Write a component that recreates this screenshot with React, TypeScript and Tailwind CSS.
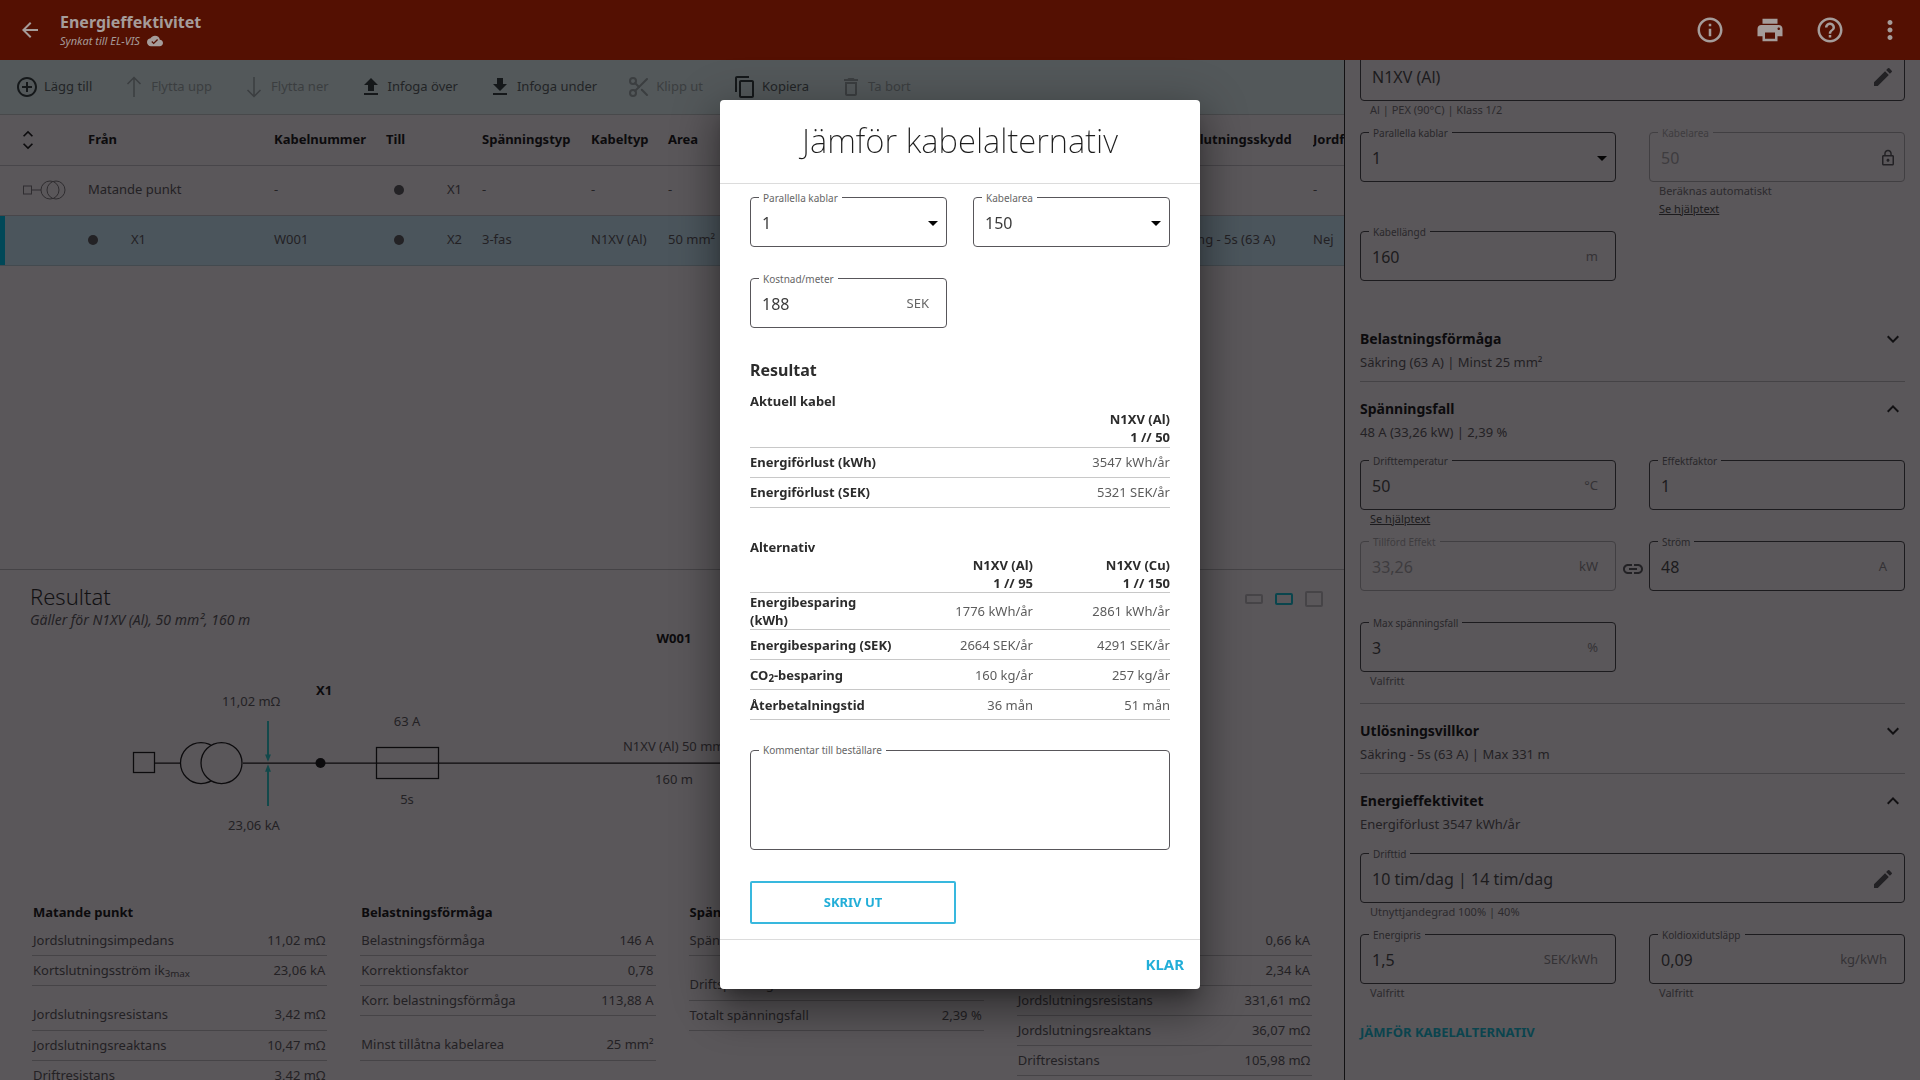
import type { ReactNode } from "react";
import { Scissors } from "lucide-react";
import {
  MdAddCircleOutline,
  MdArrowBack,
  MdArrowDropDown,
  MdCloudDone,
  MdContentCopy,
  MdDeleteOutline,
  MdFileDownload,
  MdFileUpload,
  MdHelpOutline,
  MdInfoOutline,
  MdKeyboardArrowDown,
  MdKeyboardArrowUp,
  MdLink,
  MdLockOutline,
  MdMoreVert,
  MdPrint,
} from "react-icons/md";

const ThinArrow = ({ down = false }: { down?: boolean }) => (
  <svg
    className={down ? "size-6 rotate-180" : "size-6"}
    viewBox="0 0 24 24"
    fill="none"
    stroke="currentColor"
    strokeWidth="1.5"
  >
    <path d="M12 22V3M5.500 9L12 2.500L18.500 9" />
  </svg>
);

const Header = () => (
  <header className="flex h-15 shrink-0 items-center justify-between bg-[#541002] pr-[15px] pl-[18px] text-[#a59c9a]">
    <div className="flex items-center gap-[18px]">
      <button type="button" aria-label="Tillbaka">
        <MdArrowBack className="size-6" />
      </button>
      <div>
        <h1 className="text-base leading-[22px] font-bold">Energieffektivitet</h1>
        <p className="flex h-4 items-center gap-[7px] text-[11px] leading-4 italic">
          Synkat till EL-VIS
          <MdCloudDone className="size-4" />
        </p>
      </div>
    </div>
    <div className="flex items-center gap-[30px]">
      <button type="button" aria-label="Information">
        <MdInfoOutline className="size-[30px]" />
      </button>
      <button type="button" aria-label="Skriv ut">
        <MdPrint className="size-[30px]" />
      </button>
      <button type="button" aria-label="Hjälp">
        <MdHelpOutline className="size-[30px]" />
      </button>
      <button type="button" aria-label="Mer">
        <MdMoreVert className="size-[30px]" />
      </button>
    </div>
  </header>
);

interface ToolProps {
  icon: ReactNode;
  label: string;
  disabled?: boolean;
}

const Tool = ({ icon, label, disabled = false }: ToolProps) => (
  <button
    type="button"
    disabled={disabled}
    className={`flex shrink-0 items-center gap-[5px] ${disabled ? "text-[#3b3e40]" : "text-[#15181a]"}`}
  >
    {icon}
    <span className={disabled ? "" : "text-[#222426]"}>{label}</span>
  </button>
);

const Toolbar = () => (
  <div className="flex h-[55px] shrink-0 items-center gap-[30px] overflow-hidden border-b border-[#48494b] bg-[#53585a] pl-[15px] text-[13px]">
    <Tool icon={<MdAddCircleOutline className="size-6" />} label="Lägg till" />
    <Tool icon={<ThinArrow />} label="Flytta upp" disabled />
    <Tool icon={<ThinArrow down />} label="Flytta ner" disabled />
    <Tool icon={<MdFileUpload className="size-6" />} label="Infoga över" />
    <Tool icon={<MdFileDownload className="size-6" />} label="Infoga under" />
    <Tool icon={<Scissors className="size-6" strokeWidth={2} />} label="Klipp ut" disabled />
    <Tool icon={<MdContentCopy className="size-6" />} label="Kopiera" />
    <Tool icon={<MdDeleteOutline className="size-6" />} label="Ta bort" disabled />
  </div>
);

const Dot = () => <span className="block size-[10px] rounded-full bg-[#232225]" />;

const CableTable = () => (
  <table className="w-full table-fixed text-left text-[13px] whitespace-nowrap text-[#232124]">
    <colgroup>
      <col className="w-[88px]" />
      <col className="w-[186px]" />
      <col className="w-[112px]" />
      <col className="w-[96px]" />
      <col className="w-[109px]" />
      <col className="w-[77px]" />
      <col className="w-[499px]" />
      <col className="w-[146px]" />
      <col />
    </colgroup>
    <thead>
      <tr className="h-[50px] border-b border-[#48464a] text-[#0c0b0d]">
        <th>
          <button type="button" aria-label="Fäll ut alla" className="ml-[18px] flex flex-col">
            <MdKeyboardArrowUp className="-mb-1 size-5" />
            <MdKeyboardArrowDown className="-mt-1 size-5" />
          </button>
        </th>
        <th>Från</th>
        <th>Kabelnummer</th>
        <th>Till</th>
        <th>Spänningstyp</th>
        <th>Kabeltyp</th>
        <th>Area</th>
        <th>Jordslutningsskydd</th>
        <th className="overflow-hidden">Jordfelsbrytare</th>
      </tr>
    </thead>
    <tbody>
      <tr className="h-[50px] border-b border-[#48464a]">
        <td>
          <svg className="ml-[23px] h-6 w-[44px]" viewBox="0 0 44 24" fill="none" stroke="#2f2d30">
            <rect x="0.500" y="8" width="8" height="8" />
            <path d="M8.500 12H18" />
            <circle cx="27" cy="12" r="9" />
            <circle cx="33" cy="12" r="9" />
          </svg>
        </td>
        <td>Matande punkt</td>
        <td>-</td>
        <td>
          <span className="flex items-center gap-[43px] pl-[8px]">
            <Dot /> X1
          </span>
        </td>
        <td>-</td>
        <td>-</td>
        <td>-</td>
        <td>-</td>
        <td>-</td>
      </tr>
      <tr className="h-[50px] border-b border-[#434a4f] bg-[#4b555c]">
        <td className="shadow-[inset_5px_0_#004858]" />
        <td>
          <span className="flex items-center gap-[33px]">
            <Dot /> X1
          </span>
        </td>
        <td>W001</td>
        <td>
          <span className="flex items-center gap-[43px] pl-[8px]">
            <Dot /> X2
          </span>
        </td>
        <td>3-fas</td>
        <td>N1XV (Al)</td>
        <td>50 mm²</td>
        <td>Säkring - 5s (63 A)</td>
        <td>Nej</td>
      </tr>
    </tbody>
  </table>
);

const Diagram = () => (
  <svg className="mt-[-8px] block h-[278px] w-full" fill="none" stroke="#0c0b0d" strokeWidth="1.25">
    <rect x="133.500" y="131.500" width="21" height="20" />
    <path d="M155 142H180M243 142H1180" />
    <circle cx="201" cy="142" r="20.500" />
    <circle cx="221.500" cy="142" r="20.500" fill="#5a575a" />
    <circle cx="320.500" cy="142" r="5" fill="#0c0b0d" stroke="none" />
    <rect x="376.500" y="126.500" width="62" height="31" />
    <g stroke="#13494b" fill="#13494b">
      <path d="M268 100V135M268 185V149" strokeWidth="2" />
      <path d="M266 134h4l-2 5zM266 150h4l-2-5z" />
    </g>
    <g fill="#232124" stroke="none" className="text-[13px]" textAnchor="middle">
      <text x="251" y="85">11,02 mΩ</text>
      <text x="254" y="209">23,06 kA</text>
      <text x="407" y="105">63 A</text>
      <text x="407" y="183">5s</text>
      <text x="676" y="130">N1XV (Al) 50 mm²</text>
      <text x="674" y="163">160 m</text>
      <g fill="#0c0b0d" className="font-bold">
        <text x="324" y="74">X1</text>
        <text x="674" y="22">W001</text>
      </g>
    </g>
  </svg>
);

interface ResultRow {
  label: ReactNode;
  value: string;
  spaced?: boolean;
}

const results: { title: string; rows: ResultRow[] }[] = [
  {
    title: "Matande punkt",
    rows: [
      { label: "Jordslutningsimpedans", value: "11,02 mΩ" },
      { label: <>Kortslutningsström ik<sub>3max</sub></>, value: "23,06 kA" },
      { label: "Jordslutningsresistans", value: "3,42 mΩ", spaced: true },
      { label: "Jordslutningsreaktans", value: "10,47 mΩ" },
      { label: "Driftresistans", value: "3,42 mΩ" },
    ],
  },
  {
    title: "Belastningsförmåga",
    rows: [
      { label: "Belastningsförmåga", value: "146 A" },
      { label: "Korrektionsfaktor", value: "0,78" },
      { label: "Korr. belastningsförmåga", value: "113,88 A" },
      { label: "Minst tillåtna kabelarea", value: "25 mm²", spaced: true },
    ],
  },
  {
    title: "Spänningsfall",
    rows: [
      { label: "Spänningsfall", value: "2,39 %" },
      { label: "Driftspänning", value: "390 V", spaced: true },
      { label: "Totalt spänningsfall", value: "2,39 %" },
    ],
  },
  {
    title: "Utlösningsvillkor",
    rows: [
      { label: "Jordslutningsström", value: "0,66 kA" },
      { label: "Kortslutningsström", value: "2,34 kA" },
      { label: "Jordslutningsresistans", value: "331,61 mΩ" },
      { label: "Jordslutningsreaktans", value: "36,07 mΩ" },
      { label: "Driftresistans", value: "105,98 mΩ" },
    ],
  },
];

const Results = () => (
  <section className="border-t border-[#454346] text-[#232124]">
    <div className="flex items-start justify-between pt-[11px] pr-[21px] pl-[30px]">
      <div>
        <h2 className="text-[22px] leading-[30px] font-light text-[#121113]">Resultat</h2>
        <p className="text-sm leading-[18px] italic">Gäller för N1XV (Al), 50 mm², 160 m</p>
      </div>
      <div className="flex h-9 items-center gap-3">
        <button type="button" aria-label="Liten vy" className="h-[10px] w-[18px] rounded-xs border-2 border-[#464447]" />
        <button type="button" aria-label="Mellanstor vy" className="h-3 w-[18px] rounded-xs border-2 border-[#0a454d]" />
        <button type="button" aria-label="Stor vy" className="h-4 w-[18px] rounded-xs border-2 border-[#464447]" />
      </div>
    </div>
    <Diagram />
    <div className="grid grid-cols-4 gap-[33px] px-8">
      {results.map((group) => (
        <div key={group.title}>
          <h3 className="px-px text-[13px] leading-[26px] font-bold text-[#0c0b0d]">{group.title}</h3>
          <table className="w-full text-[13px]">
            <tbody>
              {group.rows.map((row, i) => (
                <tr
                  key={i}
                  className={`border-b border-[#464447] ${row.spaced ? "h-[45px] align-bottom" : "h-[30px] align-middle"}`}
                >
                  <th className={`px-px text-left leading-4 font-normal ${row.spaced ? "pb-2" : ""}`}>{row.label}</th>
                  <td className={`px-0.5 text-right leading-4 ${row.spaced ? "pb-2" : ""}`}>{row.value}</td>
                </tr>
              ))}
            </tbody>
          </table>
        </div>
      ))}
    </div>
  </section>
);

interface FieldProps {
  id: string;
  label: string;
  value: string;
  unit?: string;
  icon?: ReactNode;
  helper?: string;
  link?: string;
  options?: string[];
  disabled?: boolean;
  light?: boolean;
}

const Field = ({ id, label, value, unit, icon, helper, link, options, disabled, light }: FieldProps) => {
  const border = light ? "border-[#58565a]" : disabled ? "border-[#413f42]" : "border-[#1c1b1e]";
  const caption = light ? "bg-white text-[#666]" : disabled ? "bg-[#5a575a] text-[#3e3c3f]" : "bg-[#5a575a] text-[#29272a]";
  const text = light ? "text-[#3c3c3c]" : disabled ? "text-[#3e3c3f]" : "text-[#1c1b1d]";
  return (
    <div className="pb-[13px]">
      <div className={`relative flex h-[50px] items-center rounded border pt-0.5 ${border} ${text}`}>
        <label htmlFor={id} className={`absolute -top-[7px] left-2 px-1 text-[10px] leading-[14px] ${caption}`}>
          {label}
        </label>
        {options ? (
          <>
            <select id={id} defaultValue={value} className="h-full w-full appearance-none pl-[11px] text-base">
              {options.map((o) => (
                <option key={o}>{o}</option>
              ))}
            </select>
            <MdArrowDropDown className="pointer-events-none absolute right-px size-6 text-[#050505]" />
          </>
        ) : (
          <input
            id={id}
            defaultValue={value}
            disabled={disabled}
            className="h-full w-0 min-w-0 flex-1 pl-[11px] text-base"
          />
        )}
        {unit && <span className={`pr-[17px] text-[13px] ${light ? "text-[#666]" : "text-[#343235]"}`}>{unit}</span>}
        {icon}
      </div>
      <div className="min-h-[18px] pl-[10px] text-[11px] leading-[18px] text-[#2c2a2d]">
        {helper && <p>{helper}</p>}
        {link && (
          <a href="#hjalp" className="block text-[#1c1b1d] underline">
            {link}
          </a>
        )}
      </div>
    </div>
  );
};

interface SectionHeadProps {
  title: string;
  summary: string;
  open?: boolean;
}

const SectionHead = ({ title, summary, open = false }: SectionHeadProps) => (
  <div className={`h-[70px] pt-4 ${open ? "" : "border-b border-[#454346]"}`}>
    <button type="button" aria-expanded={open} className="flex h-[22px] w-full items-center justify-between">
      <span className="text-sm font-bold text-[#0c0b0d]">{title}</span>
      {open ? <MdKeyboardArrowUp className="size-6" /> : <MdKeyboardArrowDown className="size-6" />}
    </button>
    <p className="text-[13px] leading-6 text-[#232124]">{summary}</p>
  </div>
);

const Pair = ({ children }: { children: ReactNode }) => (
  <div className="grid grid-cols-2 gap-x-[33px]">{children}</div>
);

const Pencil = () => (
  <button type="button" aria-label="Redigera" className="mr-[9px] text-[#222124]">
    <svg className="size-6" viewBox="0 0 24 24" fill="currentColor">
      <path d="M3 17.250V21h3.750L17.810 9.940l-3.750-3.750zM20.710 7.040a1 1 0 0 0 0-1.410l-2.340-2.340a1 1 0 0 0-1.410 0l-1.830 1.830 3.750 3.750z" />
    </svg>
  </button>
);

const Sidebar = () => (
  <aside className="w-[30%] shrink-0 overflow-hidden border-l border-[#121113] px-[15px] text-[#121113]">
    {/* scrolled a little, so the first field sits partly under the header */}
    <div className="-mt-[9px]">
      <Field id="kabel" label="Kabel" value="N1XV (Al)" icon={<Pencil />} helper="Al | PEX (90°C) | Klass 1/2" />
      <Pair>
        <Field id="parallella" label="Parallella kablar" value="1" options={["1", "2", "3"]} />
        <Field
          id="kabelarea"
          label="Kabelarea"
          value="50"
          disabled
          icon={<MdLockOutline className="mr-[7px] size-[18px] text-[#222124]" />}
          helper="Beräknas automatiskt"
          link="Se hjälptext"
        />
        <Field id="kabellangd" label="Kabellängd" value="160" unit="m" />
      </Pair>
      <SectionHead title="Belastningsförmåga" summary="Säkring (63 A) | Minst 25 mm²" />
      <SectionHead title="Spänningsfall" summary="48 A (33,26 kW) | 2,39 %" open />
      <div className="border-b border-[#454346] pt-2">
        <Pair>
          <Field id="drifttemp" label="Drifttemperatur" value="50" unit="°C" link="Se hjälptext" />
          <Field id="effektfaktor" label="Effektfaktor" value="1" />
        </Pair>
        <div className="flex">
          <div className="flex-1">
            <Field id="effekt" label="Tillförd Effekt" value="33,26" unit="kW" disabled />
          </div>
          <button type="button" aria-label="Länkade värden" className="flex h-[55px] w-[33px] items-center justify-center">
            <MdLink className="size-6 text-[#222124]" />
          </button>
          <div className="flex-1">
            <Field id="strom" label="Ström" value="48" unit="A" />
          </div>
        </div>
        <Pair>
          <Field id="maxfall" label="Max spänningsfall" value="3" unit="%" helper="Valfritt" />
        </Pair>
      </div>
      <SectionHead title="Utlösningsvillkor" summary="Säkring - 5s (63 A) | Max 331 m" />
      <SectionHead title="Energieffektivitet" summary="Energiförlust 3547 kWh/år" open />
      <div className="pt-[9px]">
        <Field
          id="drifttid"
          label="Drifttid"
          value="10 tim/dag | 14 tim/dag"
          icon={<Pencil />}
          helper="Utnyttjandegrad 100% | 40%"
        />
        <Pair>
          <Field id="energipris" label="Energipris" value="1,5" unit="SEK/kWh" helper="Valfritt" />
          <Field id="koldioxid" label="Koldioxidutsläpp" value="0,09" unit="kg/kWh" helper="Valfritt" />
        </Pair>
        <button type="button" className="mt-2 text-[13px] font-bold text-[#0b444e]">
          JÄMFÖR KABELALTERNATIV
        </button>
      </div>
    </div>
  </aside>
);

const savings: { label: ReactNode; al: string; cu: string }[] = [
  { label: "Energibesparing (kWh)", al: "1776 kWh/år", cu: "2861 kWh/år" },
  { label: "Energibesparing (SEK)", al: "2664 SEK/år", cu: "4291 SEK/år" },
  { label: <>CO<sub>2</sub>-besparing</>, al: "160 kg/år", cu: "257 kg/år" },
  { label: "Återbetalningstid", al: "36 mån", cu: "51 mån" },
];

const CompareDialog = () => (
  <div className="fixed inset-0 flex items-start justify-center overflow-hidden pt-[100px]">
    <div
      role="dialog"
      aria-labelledby="dialog-title"
      className="w-[480px] rounded bg-white text-[#2c2c2c] shadow-[0_11px_15px_-7px_rgba(0,0,0,0.3),0_24px_38px_3px_rgba(0,0,0,0.25),0_9px_46px_8px_rgba(0,0,0,0.2)]"
    >
      <h2
        id="dialog-title"
        className="flex h-[84px] items-center justify-center border-b border-[#dcdcdc] pb-0.5 text-[33px] font-extralight text-[#1c1c1c]"
      >
        Jämför kabelalternativ
      </h2>
      <div className="px-[30px] pt-[13px]">
        <div className="grid grid-cols-2 gap-x-[26px]">
          <Field id="d-parallella" label="Parallella kablar" value="1" options={["1", "2", "3"]} light />
          <Field id="d-area" label="Kabelarea" value="150" options={["95", "120", "150"]} light />
          <Field id="d-kostnad" label="Kostnad/meter" value="188" unit="SEK" light />
        </div>
        <h3 className="text-base leading-[22px] font-bold">Resultat</h3>

        <table className="mt-[11px] w-full text-[13px] leading-[18px]">
          <caption className="text-left text-[13px] leading-[18px] font-bold">Aktuell kabel</caption>
          <thead>
            <tr className="h-[37px] border-b border-[#c8c8c8]">
              <td />
              <th className="text-right font-bold">
                N1XV (Al)
                <br />1 // 50
              </th>
            </tr>
          </thead>
          <tbody>
            <tr className="h-[30px] border-b border-[#c8c8c8]">
              <th className="text-left font-bold">Energiförlust (kWh)</th>
              <td className="text-right text-[#5c5c5c]">3547 kWh/år</td>
            </tr>
            <tr className="h-[30px] border-b border-[#c8c8c8]">
              <th className="text-left font-bold">Energiförlust (SEK)</th>
              <td className="text-right text-[#5c5c5c]">5321 SEK/år</td>
            </tr>
          </tbody>
        </table>

        <table className="mt-[30px] w-full table-fixed text-[13px] leading-[18px]">
          <caption className="text-left text-[13px] leading-[18px] font-bold">Alternativ</caption>
          <colgroup>
            <col className="w-[144px]" />
            <col className="w-[139px]" />
            <col />
          </colgroup>
          <thead>
            <tr className="h-[37px] border-b border-[#c8c8c8]">
              <td />
              <th className="text-right font-bold">
                N1XV (Al)
                <br />1 // 95
              </th>
              <th className="text-right font-bold">
                N1XV (Cu)
                <br />1 // 150
              </th>
            </tr>
          </thead>
          <tbody>
            {savings.map((row) => (
              <tr key={row.cu} className="h-[30px] border-b border-[#c8c8c8]">
                <th className="text-left font-bold">{row.label}</th>
                <td className="text-right text-[#5c5c5c]">{row.al}</td>
                <td className="text-right text-[#5c5c5c]">{row.cu}</td>
              </tr>
            ))}
          </tbody>
        </table>

        <div className="relative mt-[30px]">
          <label
            htmlFor="d-kommentar"
            className="absolute -top-[7px] left-[9px] bg-white px-1 text-[10px] leading-[14px] text-[#666]"
          >
            Kommentar till beställare
          </label>
          <textarea
            id="d-kommentar"
            className="block h-[100px] w-full resize-none rounded border border-[#58565a] p-3 text-base"
          />
        </div>
        <button
          type="button"
          className="mt-[31px] mb-[15px] h-[43px] w-[206px] rounded-xs border-2 border-[#38b8de] text-[13px] font-bold text-[#22aed8]"
        >
          SKRIV UT
        </button>
      </div>
      <div className="flex h-[50px] items-center justify-end border-t border-[#dcdcdc] pr-4">
        <button type="button" className="text-[15px] font-bold text-[#22aed8]">
          KLAR
        </button>
      </div>
    </div>
  </div>
);

const App = () => (
  <div className="flex h-screen flex-col overflow-hidden bg-[#5a575a] font-['Noto_Sans',sans-serif]">
    <Header />
    <div className="flex min-h-0 flex-1">
      <main className="flex w-[70%] flex-col overflow-hidden">
        <Toolbar />
        <div className="h-[454px] shrink-0">
          <CableTable />
        </div>
        <Results />
      </main>
      <Sidebar />
    </div>
    <CompareDialog />
  </div>
);

export default App;
